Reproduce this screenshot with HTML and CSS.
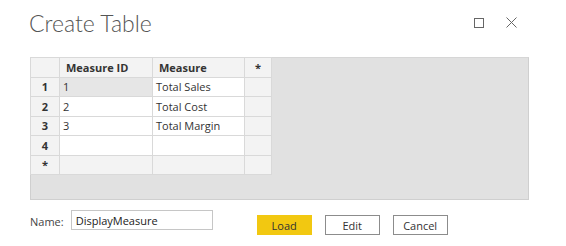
FILE: index.html
```html
<!DOCTYPE html>
<html lang="en">
<head>
  <meta charset="UTF-8" />
  <title>Create Table</title>
  <link rel="stylesheet" href="styles.css">
</head>
<body>
  <div class="dialog">
    <header class="titlebar">
      <h1>Create Table</h1>
      <div class="window-controls">
        <svg class="ctrl" width="10" height="10" viewBox="0 0 10 10">
          <rect x="0.5" y="0.5" width="9" height="9" fill="none" stroke="#666" stroke-width="1" />
        </svg>
        <svg class="ctrl" width="11" height="11" viewBox="0 0 11 11">
          <path d="M0.5 0.5 L10.5 10.5 M10.5 0.5 L0.5 10.5" stroke="#666" stroke-width="1" fill="none" />
        </svg>
      </div>
    </header>

    <div class="grid-panel">
      <table class="data-grid">
        <thead>
          <tr>
            <th class="rownum"></th>
            <th class="col-id">Measure ID</th>
            <th class="col-name">Measure</th>
            <th class="col-new">*</th>
          </tr>
        </thead>
        <tbody>
          <tr>
            <td class="rownum">1</td>
            <td class="selected">1</td>
            <td>Total Sales</td>
            <td class="col-new"></td>
          </tr>
          <tr>
            <td class="rownum">2</td>
            <td>2</td>
            <td>Total Cost</td>
            <td class="col-new"></td>
          </tr>
          <tr>
            <td class="rownum">3</td>
            <td>3</td>
            <td>Total Margin</td>
            <td class="col-new"></td>
          </tr>
          <tr>
            <td class="rownum">4</td>
            <td></td>
            <td></td>
            <td class="col-new"></td>
          </tr>
          <tr class="new-row">
            <td class="rownum">*</td>
            <td></td>
            <td></td>
            <td class="col-new"></td>
          </tr>
        </tbody>
      </table>
    </div>

    <footer class="footer">
      <label class="name-label" for="tableName">Name:</label>
      <input type="text" id="tableName" class="name-input" value="DisplayMeasure">
      <div class="actions">
        <button class="btn btn-primary">Load</button>
        <button class="btn">Edit</button>
        <button class="btn">Cancel</button>
      </div>
    </footer>
  </div>
</body>
</html>
```

FILE: styles.css
```css
* { box-sizing: border-box; }

body {
  margin: 0;
  background: #fff;
  font-family: 'Open Sans', 'Noto Sans', sans-serif;
  color: #333;
}

.dialog {
  width: 566px;
  height: 246px;
  padding: 0 37px 0 30px;
}

.titlebar {
  display: flex;
  align-items: center;
  justify-content: space-between;
  height: 57px;
  padding-bottom: 12px;
}

.titlebar h1 {
  margin: 0 0 0 -1px;
  font-family: 'Lato', 'Open Sans', sans-serif;
  font-size: 23px;
  font-weight: 300;
  color: #555;
}

.window-controls {
  display: flex;
  align-items: center;
  gap: 22px;
  margin-right: 12px;
}

.ctrl {
  display: block;
}

.grid-panel {
  height: 143px;
  background: #e1e1e1;
  border: 1px solid #cfcfcf;
  border-top-color: #d6d6d6;
}

.data-grid {
  border-collapse: collapse;
  font-size: 11px;
  table-layout: fixed;
  margin: -1px 0 0 -1px;
}

.data-grid th,
.data-grid td {
  height: 19.5px;
  padding: 0 3px;
  border: 1px solid #d9d9d9;
  background: #fff;
  text-align: left;
  white-space: nowrap;
  color: #333;
}

.data-grid th {
  background: #f3f3f3;
  font-weight: 700;
  color: #333;
  padding-left: 6px;
}

.data-grid .rownum {
  width: 29px;
  background: #f3f3f3;
  font-weight: 700;
  text-align: center;
  padding: 0;
}

.data-grid .col-id { width: 93px; }
.data-grid .col-name { width: 92px; }

.data-grid .col-new {
  width: 27px;
  background: #f3f3f3;
  text-align: center;
  padding: 0;
}

.data-grid td.selected {
  background: #e6e6e6;
}

.new-row td {
  background: #f3f3f3;
}

.footer {
  display: flex;
  align-items: flex-start;
  padding-top: 10px;
  font-size: 11px;
}

.name-label {
  margin-top: 4px;
  color: #444;
}

.name-input {
  width: 142px;
  height: 20px;
  margin-left: 7px;
  padding: 0 4px;
  border: 1px solid #c6c6c6;
  font-family: inherit;
  font-size: 11px;
  color: #222;
  outline: none;
}

.actions {
  display: flex;
  gap: 13px;
  margin-left: 44px;
  margin-top: 5px;
}

.btn {
  width: 55px;
  height: 20px;
  padding: 0;
  border: 1px solid #8c8c8c;
  background: #fff;
  font-family: inherit;
  font-size: 11px;
  color: #333;
  cursor: pointer;
}

.btn-primary {
  background: #f2c811;
  border-color: #f2c811;
}
```
